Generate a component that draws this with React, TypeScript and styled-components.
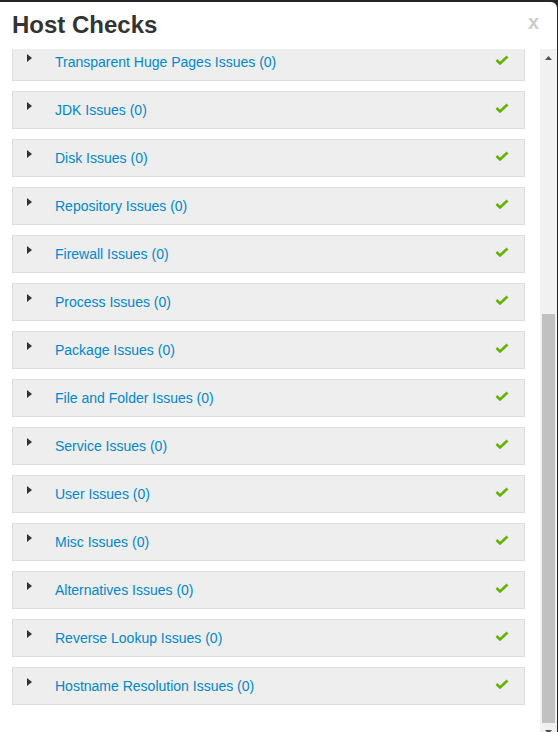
import { useLayoutEffect, useRef, useState } from 'react'
import styled, { createGlobalStyle } from 'styled-components'

const GlobalStyle = createGlobalStyle`
  html, body {
    margin: 0;
    padding: 0;
    overflow: hidden;
    background: #262626;
  }
  body {
    font-family: "Liberation Sans", Arial, sans-serif;
  }
`

const Backdrop = styled.div`
  width: 558px;
  height: 732px;
  background: #262626;
  padding-top: 2px;
  box-sizing: border-box;
`

const Modal = styled.div`
  width: 557px;
  height: 738px;
  background: #fff;
  border-top-right-radius: 6px;
  display: flex;
  flex-direction: column;
  overflow: hidden;
`

const Header = styled.div`
  display: flex;
  justify-content: space-between;
  align-items: flex-start;
  padding: 9px 18px 11px 12px;
  height: 47px;
  box-sizing: border-box;
  flex: none;
`

const Title = styled.h3`
  margin: 0;
  font-size: 24px;
  line-height: 27px;
  font-weight: bold;
  color: #333;
`

const Close = styled.button`
  border: none;
  background: none;
  padding: 0;
  margin-top: 1px;
  font-family: "Liberation Sans", Arial, sans-serif;
  font-size: 20px;
  line-height: 20px;
  font-weight: bold;
  color: #000;
  opacity: 0.2;
  cursor: pointer;
`

const Body = styled.div`
  flex: 1;
  display: flex;
  min-height: 0;
`

const ScrollArea = styled.div`
  flex: 1;
  overflow-y: scroll;
  scrollbar-width: none;
  padding: 15px 15px 35px 12px;
  &::-webkit-scrollbar {
    display: none;
  }
`

// drawn scrollbar (the native one is hidden in the headless browser)
const Scrollbar = styled.div`
  width: 17px;
  flex: none;
  display: flex;
  flex-direction: column;
  background: #f1f1f1;
`

const ScrollButton = styled.div`
  height: 17px;
  flex: none;
  display: flex;
  align-items: center;
  justify-content: center;
`

const Track = styled.div`
  flex: 1;
  position: relative;
`

const Thumb = styled.div`
  position: absolute;
  left: 2px;
  right: 2px;
  background: #c1c1c1;
`

const Intro = styled.div`
  height: 388px;
  margin-bottom: 10px;
`

const Row = styled.div`
  display: flex;
  align-items: center;
  height: 38px;
  box-sizing: border-box;
  background: #eee;
  border: 1px solid #ddd;
  padding: 0 15px 0 14px;
  margin-bottom: 10px;
  &:last-child {
    margin-bottom: 0;
  }
`

const Caret = styled.span`
  align-self: flex-start;
  margin-top: 10px;
  width: 0;
  height: 0;
  border-left: 5px solid #333;
  border-top: 4px solid transparent;
  border-bottom: 4px solid transparent;
`

const Label = styled.a`
  flex: 1;
  margin-left: 23px;
  font-size: 14px;
  color: #0088cc;
  text-decoration: none;
  cursor: pointer;
`

const Check = styled.svg`
  align-self: flex-start;
  margin-top: 11px;
  width: 14px;
  height: 10px;
`

const categories = [
  'Transparent Huge Pages Issues',
  'JDK Issues',
  'Disk Issues',
  'Repository Issues',
  'Firewall Issues',
  'Process Issues',
  'Package Issues',
  'File and Folder Issues',
  'Service Issues',
  'User Issues',
  'Misc Issues',
  'Alternatives Issues',
  'Reverse Lookup Issues',
  'Hostname Resolution Issues'
]

function OkIcon () {
  return (
    <Check viewBox='0 0 14 10'>
      <polyline
        points='1.5,5 5,8.5 12.5,1.5'
        fill='none'
        stroke='#63b300'
        strokeWidth='2.6'
      />
    </Check>
  )
}

function Arrow ({ up }: { up: boolean }) {
  return (
    <svg width='7' height='4' viewBox='0 0 7 4'>
      <polygon points={up ? '0,4 7,4 3.5,0' : '0,0 7,0 3.5,4'} fill='#505050' />
    </svg>
  )
}

function App () {
  const areaRef = useRef<HTMLDivElement>(null)
  const [thumb, setThumb] = useState({ top: 0, size: 0 })

  useLayoutEffect(() => {
    const el = areaRef.current
    if (!el) return
    el.scrollTop = el.scrollHeight
    const track = el.clientHeight - 34
    setThumb({
      top: (track * el.scrollTop) / el.scrollHeight,
      size: (track * el.clientHeight) / el.scrollHeight
    })
  }, [])

  return (
    <Backdrop>
      <GlobalStyle />
      <Modal>
        <Header>
          <Title>Host Checks</Title>
          <Close>x</Close>
        </Header>
        <Body>
          <ScrollArea ref={areaRef}>
            <Intro />
            {categories.map(name => (
              <Row key={name}>
                <Caret />
                <Label>{name} (0)</Label>
                <OkIcon />
              </Row>
            ))}
          </ScrollArea>
          <Scrollbar>
            <ScrollButton><Arrow up /></ScrollButton>
            <Track>
              <Thumb style={{ top: thumb.top, height: thumb.size }} />
            </Track>
            <ScrollButton><Arrow up={false} /></ScrollButton>
          </Scrollbar>
        </Body>
      </Modal>
    </Backdrop>
  )
}

export default App
